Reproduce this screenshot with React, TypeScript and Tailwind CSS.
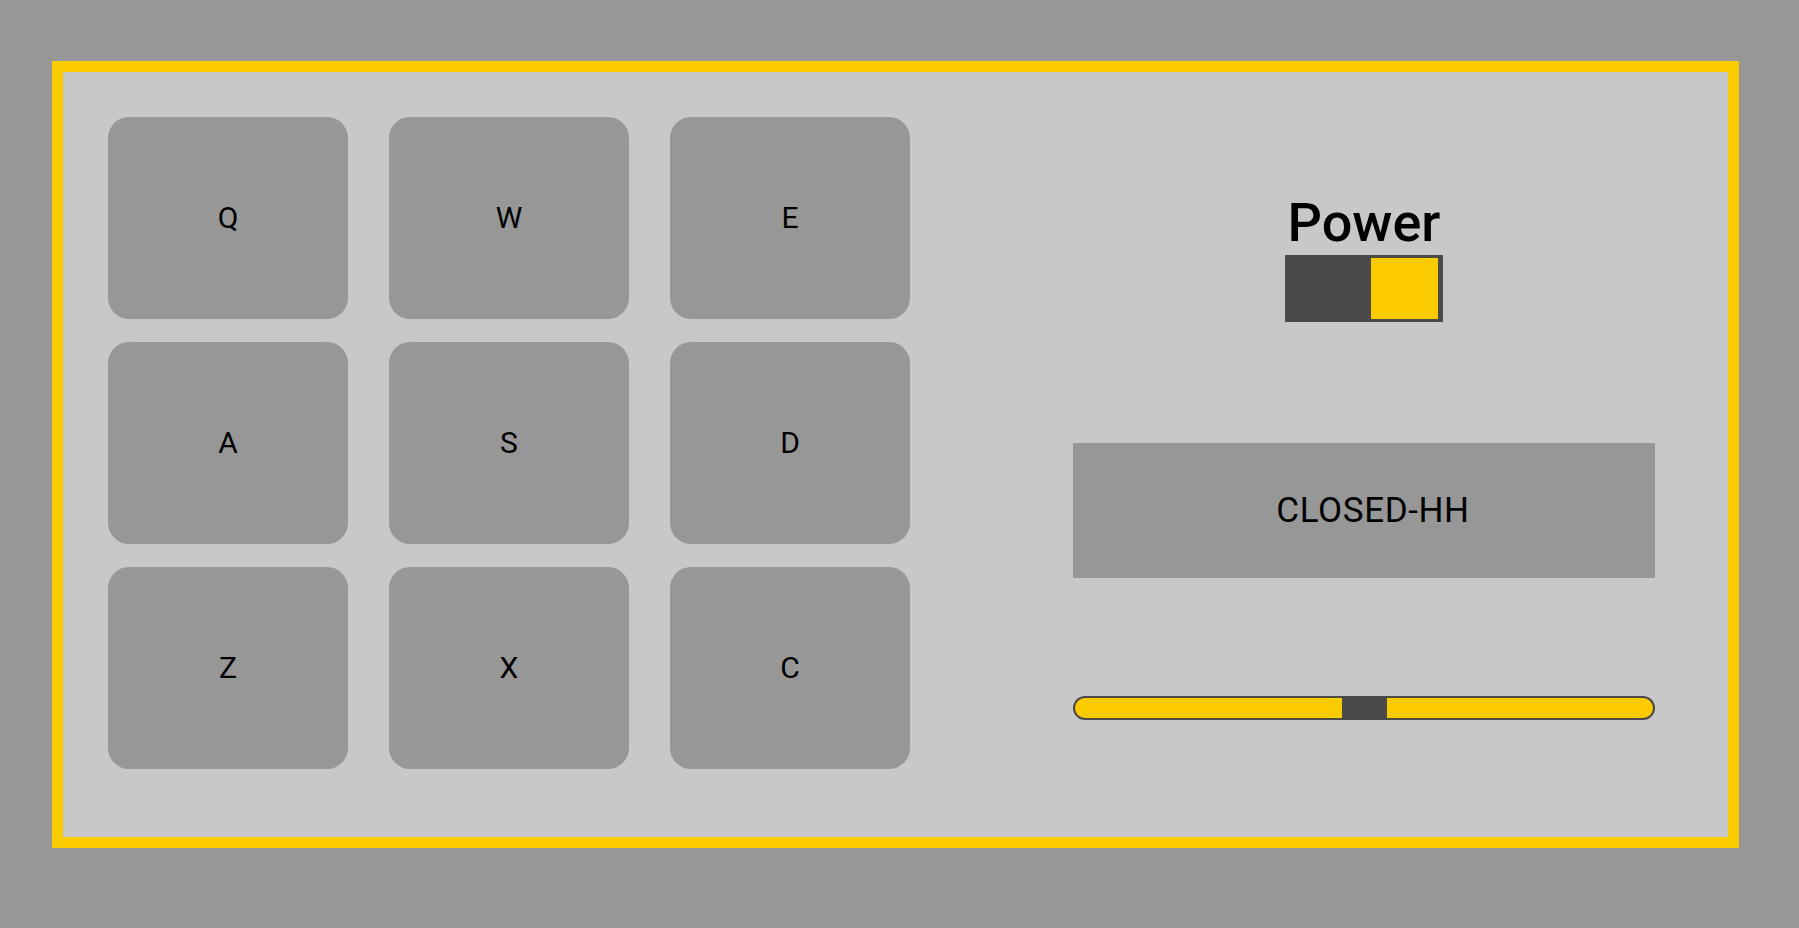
import React, { useState } from 'react';

const keys = ['Q', 'W', 'E', 'A', 'S', 'D', 'Z', 'X', 'C'];

const App = () => {
  const [power, setPower] = useState(true);
  const [volume, setVolume] = useState(50);
  const [display, setDisplay] = useState('CLOSED-HH');

  return (
    <div
      className="h-screen w-full bg-[#979797] pt-[61px] pl-[52px] overflow-hidden"
      style={{ fontFamily: 'Roboto, "Liberation Sans", sans-serif' }}
    >
      <div className="w-[1687px] h-[787px] border-[11px] border-[#f9cb00] bg-[#c8c8c8] flex p-[45px]">
        <div className="grid grid-cols-[repeat(3,240px)] grid-rows-[repeat(3,202px)] gap-x-[41px] gap-y-[23px]">
          {keys.map((k) => (
            <button
              key={k}
              onClick={() => setDisplay(k)}
              className="bg-[#979797] rounded-[21px] flex items-center justify-center text-[30px] leading-none text-black"
            >
              {k}
            </button>
          ))}
        </div>

        <div className="ml-[163px] w-[582px] flex flex-col items-center">
          <div className="mt-[79px] text-[54px] font-medium leading-none text-black">Power</div>
          <button
            onClick={() => setPower(!power)}
            className={`mt-[5px] w-[158px] h-[67px] bg-[#4a4a4a] flex p-[3px] pr-[5px] ${power ? 'justify-end' : 'justify-start pl-[5px] pr-[3px]'}`}
          >
            <div className="w-[67px] h-full bg-[#f9cb00]" />
          </button>

          <div className="mt-[121px] w-[582px] h-[135px] bg-[#979797] flex items-center justify-center pl-[18px] text-[35px] tracking-[0.6px] leading-none text-black">
            {display}
          </div>

          <div className="mt-[118px] w-[582px] h-[24px] rounded-full border-2 border-[#4a4a4a] bg-[#f9cb00] relative overflow-hidden">
            <div
              className="absolute top-0 bottom-0 w-[45px] bg-[#4a4a4a]"
              style={{ left: `calc(${volume}% - 22px)` }}
              onClick={() => setVolume(volume)}
            />
          </div>
        </div>
      </div>
    </div>
  );
};

export default App;
